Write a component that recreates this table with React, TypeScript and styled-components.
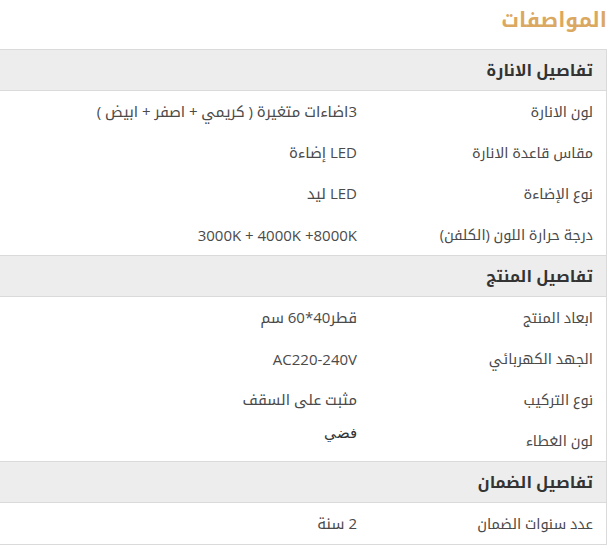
import React from 'react';
import styled, { createGlobalStyle } from 'styled-components';

const GlobalStyle = createGlobalStyle`
  html, body {
    margin: 0;
    padding: 0;
    background: #ffffff;
    overflow: hidden;
  }
  body {
    font-family: 'Open Sans', 'Noto Kufi Arabic', 'Noto Sans Arabic', 'DejaVu Sans', sans-serif;
  }
`;

const Page = styled.div`
  direction: rtl;
  width: 614px;
  height: 549px;
  padding: 0 7px 0 0;
  box-sizing: border-box;
`;

const Heading = styled.h2`
  margin: 0;
  height: 49px;
  display: flex;
  align-items: center;
  padding-bottom: 8px;
  box-sizing: border-box;
  font-size: 20.5px;
  font-weight: 700;
  color: #dba862;
`;

const Table = styled.div`
  margin-left: -12px;
  border: 1px solid #dadada;
  border-left: none;
  display: flex;
  flex-direction: column;
`;

const GroupHeader = styled.div<{ $first?: boolean }>`
  height: 40px;
  display: flex;
  align-items: center;
  padding: 0 13px;
  background: #ededed;
  border-top: ${p => (p.$first ? 'none' : '1px solid #dadada')};
  border-bottom: 1px solid #dadada;
  font-size: 16px;
  font-weight: 700;
  color: #333333;
`;

const Row = styled.div`
  height: 41px;
  display: flex;
  align-items: center;
  color: #4a4a4a;
`;

const Label = styled.div`
  width: 236px;
  padding: 0 13px;
  box-sizing: border-box;
  flex-shrink: 0;
  font-size: 14.5px;
`;

const Value = styled.div<{ $odd?: boolean }>`
  padding: 0 13px;
  font-size: 15px;
  ${p =>
    p.$odd
      ? `
    align-self: flex-start;
    padding-top: 4px;
    font-family: 'Liberation Sans', sans-serif;
    color: #333;
  `
      : ''}
`;

type Spec = { label: string; value: string; odd?: boolean; ltr?: boolean };
type Group = { title: string; rows: Spec[] };

const groups: Group[] = [
  {
    title: 'تفاصيل الانارة',
    rows: [
      { label: 'لون الانارة', value: '3اضاءات متغيرة ( كريمي + اصفر + ابيض )' },
      { label: 'مقاس قاعدة الانارة', value: 'LED إضاءة' },
      { label: 'نوع الإضاءة', value: 'LED ليد' },
      { label: 'درجة حرارة اللون (الكلفن)', value: '3000K + 4000K +8000K', ltr: true },
    ],
  },
  {
    title: 'تفاصيل المنتج',
    rows: [
      { label: 'ابعاد المنتج', value: 'قطر40*60 سم' },
      { label: 'الجهد الكهربائي', value: 'AC220-240V', ltr: true },
      { label: 'نوع التركيب', value: 'مثبت على السقف' },
      { label: 'لون الغطاء', value: 'فضي', odd: true },
    ],
  },
  {
    title: 'تفاصيل الضمان',
    rows: [{ label: 'عدد سنوات الضمان', value: '2 سنة' }],
  },
];

const App: React.FC = () => {
  return (
    <>
      <GlobalStyle />
      <Page>
        <Heading>المواصفات</Heading>
        <Table>
          {groups.map((group, gi) => (
            <React.Fragment key={group.title}>
              <GroupHeader $first={gi === 0}>{group.title}</GroupHeader>
              {group.rows.map(row => (
                <Row key={row.label}>
                  <Label>{row.label}</Label>
                  <Value $odd={row.odd} dir={row.ltr ? 'ltr' : undefined}>
                    {row.value}
                  </Value>
                </Row>
              ))}
            </React.Fragment>
          ))}
        </Table>
      </Page>
    </>
  );
};

export default App;
